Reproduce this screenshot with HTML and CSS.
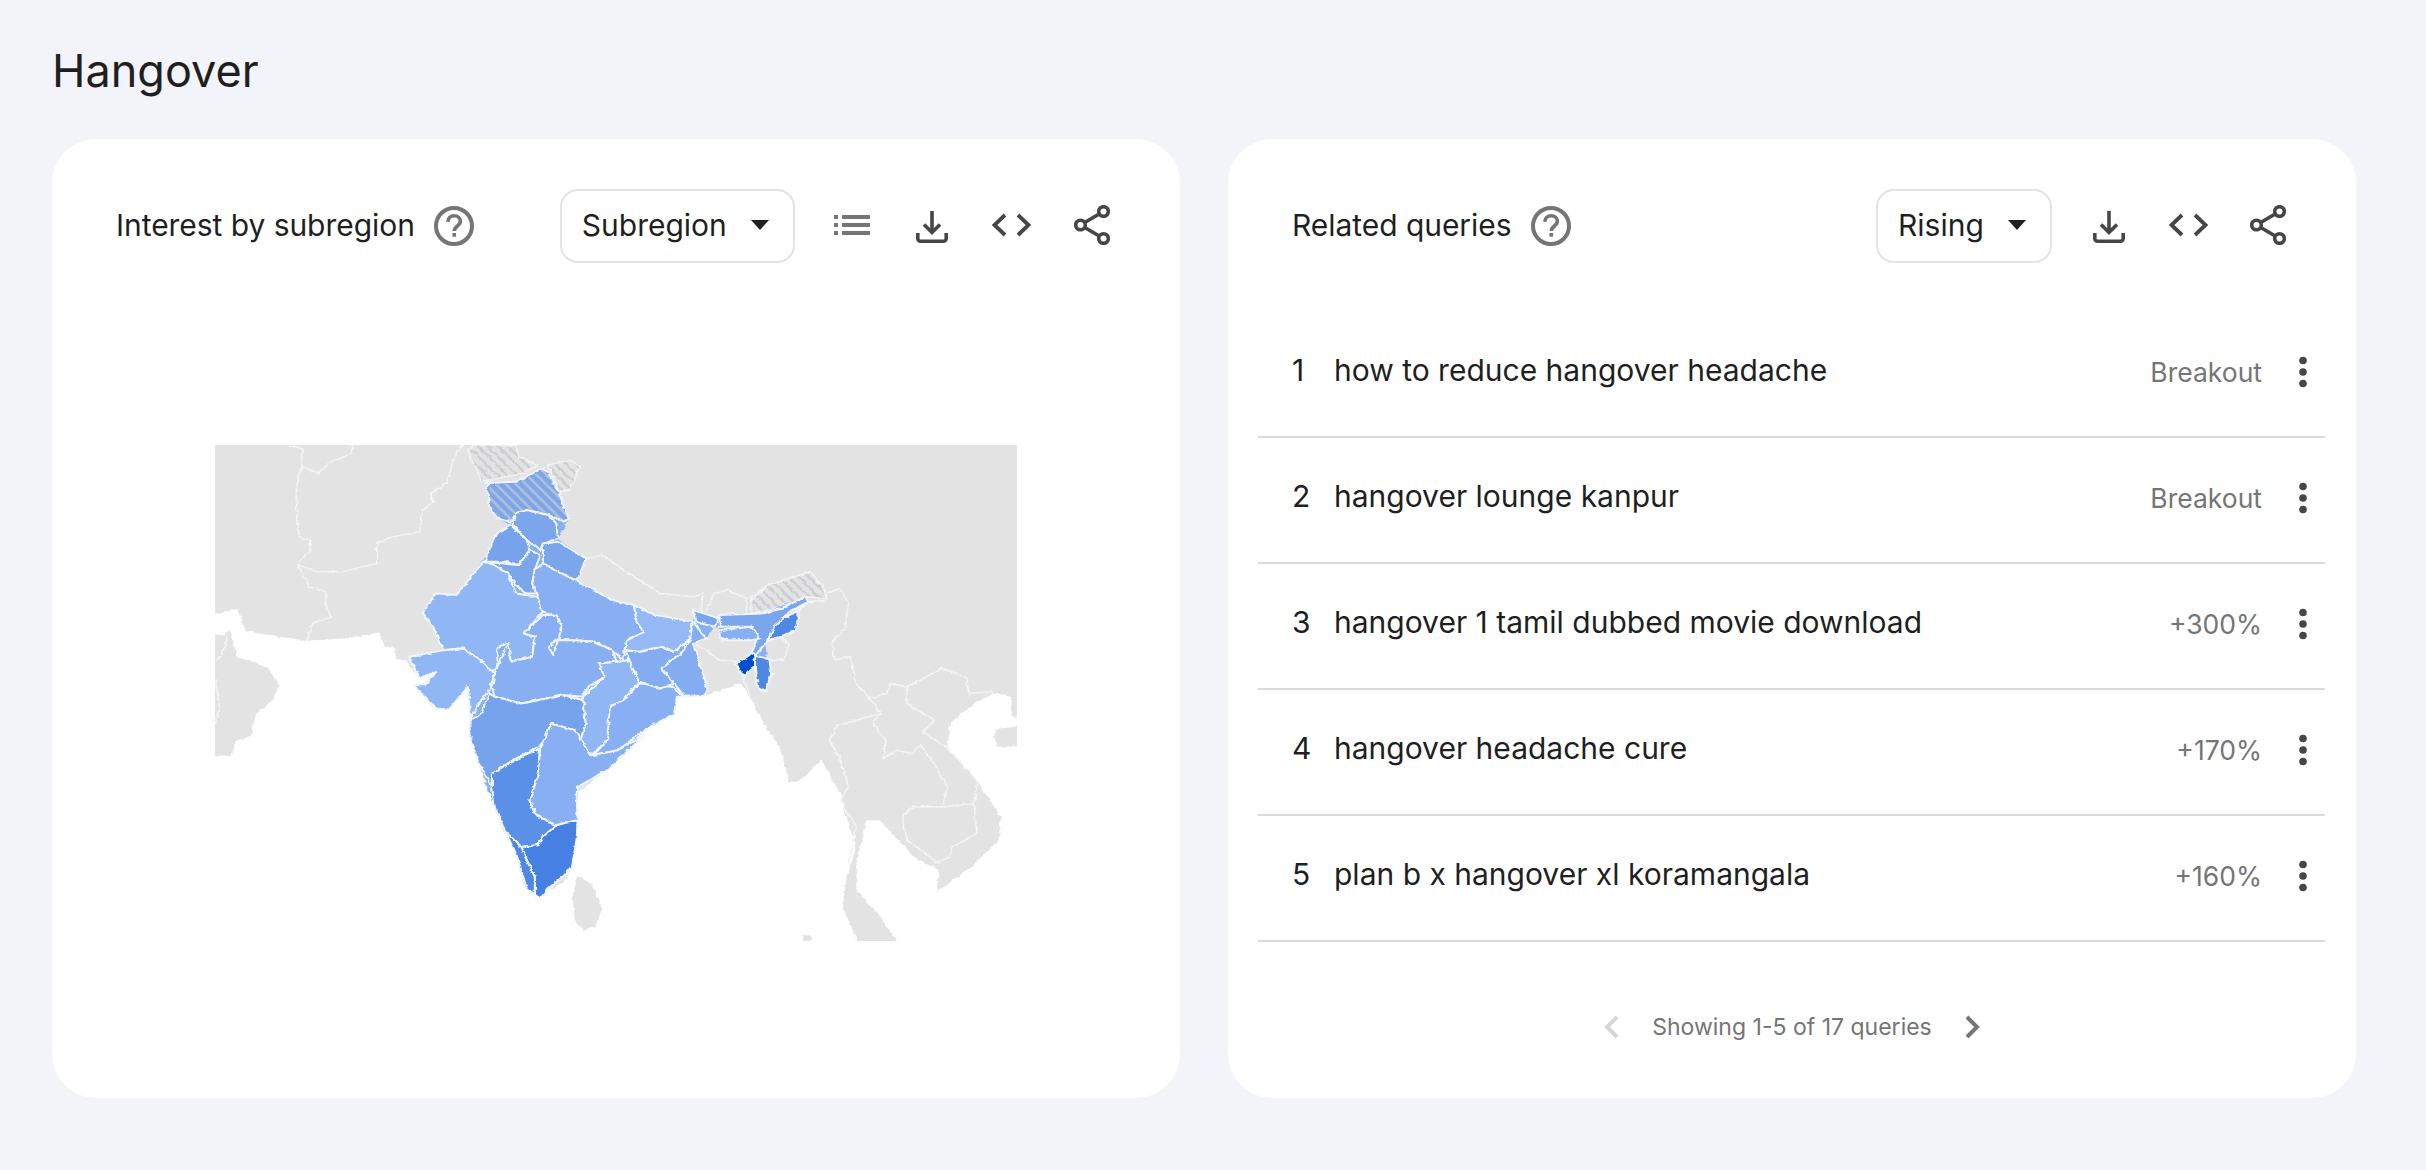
FILE: index.html
```html
<!DOCTYPE html>
<html lang="en">
<head>
<meta charset="utf-8">
<title>Hangover</title>
<link rel="stylesheet" href="styles.css">
</head>
<body>
<svg class="defs" width="0" height="0" aria-hidden="true">
  <defs>
    <symbol id="i-help" viewBox="0 0 40 40"><circle cx="20" cy="20" r="18" fill="none" stroke="currentColor" stroke-width="4"/><path d="M13.800 15.800c.2-3.700 2.900-6 6.400-6 3.500 0 6.200 2.300 6.200 5.300 0 2.600-1.500 3.800-3.200 5.100-1.500 1.200-2.900 2.300-2.900 4.800" fill="none" stroke="currentColor" stroke-width="3.600"/><rect x="18.400" y="27" width="3.700" height="3.700" fill="currentColor"/></symbol>
    <symbol id="i-list" viewBox="0 0 36 20"><path d="M0 0h4v4H0zM8 0h28v4H8zM0 8h4v4H0zM8 8h28v4H8zM0 16h4v4H0zM8 16h28v4H8z" fill="currentColor"/></symbol>
    <symbol id="i-download" viewBox="0 0 32 32"><path d="M16 0v21M8 13.500l8 8 8-8" fill="none" stroke="currentColor" stroke-width="3.600"/><path d="M1.800 22v5.500a2.700 2.700 0 0 0 2.700 2.700h23a2.700 2.700 0 0 0 2.700-2.700V22" fill="none" stroke="currentColor" stroke-width="3.600"/></symbol>
    <symbol id="i-code" viewBox="0 0 39 24"><path d="M13 2 2.500 12 13 22M26 2l10.500 10L26 22" fill="none" stroke="currentColor" stroke-width="3.800"/></symbol>
    <symbol id="i-share" viewBox="0 0 36 40"><path d="M29.500 6.500 6.500 20l23 13.500" fill="none" stroke="currentColor" stroke-width="3.600"/><circle cx="29.500" cy="6.500" r="4.800" fill="#fff" stroke="currentColor" stroke-width="3.600"/><circle cx="6.500" cy="20" r="4.800" fill="#fff" stroke="currentColor" stroke-width="3.600"/><circle cx="29.500" cy="33.500" r="4.800" fill="#fff" stroke="currentColor" stroke-width="3.600"/></symbol>
    <symbol id="i-dots" viewBox="0 0 12 32"><circle cx="6" cy="4.500" r="3.800" fill="currentColor"/><circle cx="6" cy="16" r="3.800" fill="currentColor"/><circle cx="6" cy="27.500" r="3.800" fill="currentColor"/></symbol>
    <pattern id="hatch" patternUnits="userSpaceOnUse" width="18.670" height="30"><polygon points="0,0 6.500,0 18.670,19.600 18.670,30"/><polygon points="0,19.600 6.500,30 0,30"/></pattern>
    <filter id="rough" x="-2%" y="-2%" width="104%" height="104%"><feTurbulence type="fractalNoise" baseFrequency="0.09 0.07" numOctaves="3" seed="4"/><feDisplacementMap in="SourceGraphic" scale="9" xChannelSelector="R" yChannelSelector="G"/></filter>
  </defs>
</svg>

<h1 class="title">Hangover</h1>

<main class="cards">
  <section class="card">
    <header class="card-head">
      <h2 class="card-title">Interest by subregion</h2>
      <svg class="help"><use href="#i-help"/></svg>
      <div class="select select-sub"><span>Subregion</span><i class="caret"></i></div>
      <div class="tools">
        <span class="tool tool-list"><svg class="ic-list"><use href="#i-list"/></svg></span>
        <span class="tool"><svg class="ic-dl"><use href="#i-download"/></svg></span>
        <span class="tool"><svg class="ic-code"><use href="#i-code"/></svg></span>
        <span class="tool"><svg class="ic-share"><use href="#i-share"/></svg></span>
      </div>
    </header>

    <svg class="map" viewBox="28 45 1497 1487" preserveAspectRatio="none" role="img" aria-label="Map of India by subregion">
      <rect class="land" x="0" y="0" width="1600" height="1600"/>
      <g class="sea" filter="url(#rough)">
        <polygon points="-20,565 45,545 72,537 78,570 85,603 130,615 200,632 270,625 335,607 345,650 365,655 365,690 385,690 395,715 410,745 440,725 420,765 400,765 440,835 465,838 500,770 500,800 505,865 505,920 520,1000 535,1070 550,1130 565,1200 590,1270 605,1370 635,1405 650,1380 680,1355 695,1305 690,1280 705,1180 703,1090 760,1020 830,900 885,850 890,800 945,795 1010,760 1030,810 1060,900 1085,960 1100,1060 1120,1050 1160,990 1195,1090 1205,1150 1225,1250 1205,1360 1200,1430 1245,1600 -20,1600 -20,980 60,975 65,935 95,915 105,850 130,820 150,765 125,712 70,680 62,640 55,600 45,615 -20,605"/>
        <polygon points="1330,1600 1270,1460 1225,1380 1225,1300 1245,1170 1270,1170 1285,1200 1340,1290 1380,1320 1375,1385 1440,1310 1490,1230 1495,1160 1450,1050 1395,950 1400,880 1445,820 1480,790 1515,800 1515,860 1600,860 1600,1600"/>
      </g>
      <g class="land-shape" filter="url(#rough)">
        <polygon points="705,1335 730,1360 750,1430 740,1490 715,1498 700,1470 695,1400"/>
        <polygon points="1600,880 1490,895 1480,925 1490,950 1600,935"/>
        <polygon points="1115,1600 1125,1515 1140,1515 1140,1600"/>
      </g>
      <g class="borders" filter="url(#rough)">
        <polyline points="165,45 190,55 190,110 220,130 245,95 285,70 285,45"/>
        <polyline points="190,110 180,170 180,240 185,320 205,330 205,360 182,403"/>
        <polyline points="182,403 220,425 265,425 330,400 330,340 360,320 410,305 415,240 435,215 430,190 460,160 475,80 490,45"/>
        <polyline points="182,403 205,470 235,485 235,535 245,560 210,580 200,630"/>
        <polyline points="28,750 38,830 28,880"/>
        <polyline points="50,620 40,680 28,690"/>
        <polyline points="720,385 750,375 800,430 860,490 920,500 940,490 935,545"/>
        <polyline points="945,545 960,490 985,480 1020,505 1020,550"/>
        <polyline points="1020,510 1060,465 1140,425 1165,480 1170,510 1135,515"/>
        <polyline points="1170,490 1195,475 1210,520 1205,590 1180,640 1185,690 1215,680 1225,760 1250,805 1280,790 1290,760 1320,770 1385,715 1430,740 1435,790 1480,785"/>
        <polyline points="1100,640 1090,690 1060,690"/>
        <polyline points="1135,515 1100,560 1075,615 1100,640"/>
        <polyline points="925,640 945,660 970,690 1000,695 1010,725 1030,810"/>
        <polyline points="970,630 1030,630"/>
        <polyline points="1250,805 1270,850 1190,885 1175,930 1195,990 1210,1070 1195,1110 1225,1190 1210,1300"/>
        <polyline points="1270,850 1255,880 1280,930 1275,985 1300,960 1330,970 1345,945 1370,1000 1395,1070 1385,1130 1330,1130 1310,1160 1320,1230 1380,1300"/>
        <polyline points="1385,1130 1445,1120 1450,1210 1405,1250 1400,1280 1370,1300"/>
        <polyline points="1320,770 1320,820 1350,850 1370,870 1350,905 1400,960 1450,1050 1445,1120"/>
      </g>
      <g class="hatched filled-land" filter="url(#rough)">
        <polygon points="500,62 510,45 590,45 595,80 630,105 605,130 540,150 525,155"/>
        <polygon points="650,105 690,90 710,110 690,180 670,185"/>
        <polygon points="1030,510 1060,465 1140,425 1165,480 1170,505 1130,500 1085,535 1030,548"/>
      </g>
      <g class="states" filter="url(#rough)">
        <polygon class="s-base" points="535,160 590,155 640,115 650,130 670,185 690,265 668,325 720,385 705,455 770,510 810,525 850,555 920,575 925,540 970,565 970,555 1050,550 1130,500 1135,515 1100,545 1110,600 1065,625 1055,640 1062,730 1055,780 1040,720 1033,705 1015,738 1005,700 1030,670 1040,620 1030,630 970,620 970,590 960,590 945,625 920,640 945,760 945,795 905,800 890,800 885,850 830,900 760,1020 705,1070 705,1170 695,1305 650,1375 635,1405 610,1375 590,1270 550,1130 520,1000 505,920 505,865 500,770 465,838 440,835 400,765 420,765 440,725 410,745 390,680 455,660 435,590 415,550 440,490 480,495 510,430 535,375 555,310 580,285 555,265 540,230"/>
        <polygon class="s-k" points="535,160 590,155 640,115 650,130 670,185 680,235 690,265 680,275 650,255 610,240 590,250 580,275 555,265 540,230"/>
        <polygon class="s-k" points="590,250 610,240 650,255 665,280 668,325 640,340 635,360 610,330 585,285"/>
        <polygon class="s-m" points="555,310 580,285 610,330 615,360 595,405 570,395 535,395 535,375"/>
        <polygon class="s-k" points="640,340 670,335 720,385 705,450 680,440 640,400"/>
        <polygon class="s-k" points="535,395 595,405 615,360 635,375 625,420 620,460 635,490 610,490 590,465 575,430 550,405"/>
        <polygon class="s-a" points="530,395 550,405 575,430 590,490 630,500 640,545 605,610 625,620 620,680 580,695 575,640 555,650 555,710 545,725 515,680 485,655 455,660 435,590 415,550 440,490 480,495 510,430"/>
        <polygon class="s-a" points="390,680 455,660 490,655 515,680 550,730 540,780 525,810 505,865 500,770 465,838 440,835 400,765 420,765 440,725 410,745"/>
        <polygon class="s-b" points="625,420 640,400 705,455 770,510 810,525 815,575 828,605 795,632 790,690 770,660 735,635 700,630 665,630 650,650 660,675 670,620 675,590 665,555 640,545 630,500 620,460"/>
        <polygon class="s-b" points="555,710 575,640 580,695 620,680 625,620 605,610 640,555 665,555 675,590 670,620 660,675 650,650 665,630 700,630 735,635 770,660 778,695 745,700 755,740 725,770 715,800 680,795 600,820 550,800 545,770 550,730"/>
        <polygon class="s-m" points="540,790 550,800 600,820 680,795 715,810 720,880 710,930 700,900 655,880 640,940 585,990 545,1030 545,1070 520,1000 505,920 505,870 525,850"/>
        <polygon class="s-a" points="778,695 800,690 820,755 790,810 765,830 765,880 760,930 730,975 710,930 720,880 715,800 755,740 745,700"/>
        <polygon class="s-b" points="820,760 880,770 905,800 890,800 885,850 830,900 780,960 735,975 760,930 765,830 790,810"/>
        <polygon class="s-c" points="795,660 820,665 860,650 885,665 915,625 905,660 860,715 885,760 860,775 820,755 800,690"/>
        <polygon class="s-z" points="810,525 850,555 920,575 915,625 885,665 860,650 820,665 795,660 795,632 828,605 815,575"/>
        <polygon class="s-k" points="920,540 950,555 968,565 960,590 925,575"/>
        <polygon class="s-c" points="920,575 945,625 920,640 925,665 945,760 945,795 905,800 885,760 860,715 905,660 915,625"/>
        <polygon class="s-k" points="970,555 1050,550 1085,535 1130,500 1135,515 1100,545 1065,620 1055,640 1040,670 1030,670 1040,620 1030,590 970,590"/>
        <polygon class="s-b" points="970,600 1030,590 1045,625 1030,630 985,630 970,620"/>
        <polygon class="s-n" points="1118,543 1112,602 1083,620 1062,630 1072,588 1092,560"/>
        <polygon class="s-t" points="1001,700 1023,677 1033,666 1037,705 1023,724 1014,742"/>
        <polygon class="s-n" points="1036,676 1063,688 1066,732 1057,784 1043,778 1036,722"/>
        <polygon class="s-d" points="545,1070 545,1030 585,990 635,955 630,1040 615,1110 625,1150 665,1185 640,1220 630,1245 600,1250 570,1205 550,1130"/>
        <polygon class="s-b" points="640,940 655,880 700,900 730,975 780,960 830,915 760,1020 705,1070 703,1090 705,1170 665,1185 625,1150 615,1110 630,1040 635,955"/>
        <polygon class="s-e" points="665,1185 705,1170 703,1225 695,1305 680,1335 650,1375 635,1405 625,1395 625,1340 610,1290 600,1250 630,1245 640,1220"/>
        <polygon class="s-n" points="570,1205 600,1250 610,1290 625,1340 625,1395 635,1405 610,1375 590,1270"/>
      </g>
      <polygon class="hatched" points="540,165 590,160 640,120 650,135 668,185 678,235 686,262 680,270 650,250 610,236 590,246 580,270 557,260 543,228"/>
    </svg>
  </section>

  <section class="card">
    <header class="card-head">
      <h2 class="card-title">Related queries</h2>
      <svg class="help"><use href="#i-help"/></svg>
      <div class="select select-rise"><span>Rising</span><i class="caret"></i></div>
      <div class="tools">
        <span class="tool"><svg class="ic-dl"><use href="#i-download"/></svg></span>
        <span class="tool"><svg class="ic-code"><use href="#i-code"/></svg></span>
        <span class="tool"><svg class="ic-share"><use href="#i-share"/></svg></span>
      </div>
    </header>

    <ol class="rows">
      <li class="row"><span class="num">1</span><span class="query">how to reduce hangover headache</span><span class="val">Breakout</span><svg class="dots"><use href="#i-dots"/></svg></li>
      <li class="row"><span class="num">2</span><span class="query">hangover lounge kanpur</span><span class="val">Breakout</span><svg class="dots"><use href="#i-dots"/></svg></li>
      <li class="row"><span class="num">3</span><span class="query">hangover 1 tamil dubbed movie download</span><span class="val">+300%</span><svg class="dots"><use href="#i-dots"/></svg></li>
      <li class="row"><span class="num">4</span><span class="query">hangover headache cure</span><span class="val">+170%</span><svg class="dots"><use href="#i-dots"/></svg></li>
      <li class="row"><span class="num">5</span><span class="query">plan b x hangover xl koramangala</span><span class="val">+160%</span><svg class="dots"><use href="#i-dots"/></svg></li>
    </ol>

    <nav class="pager">
      <svg class="chev chev-off" viewBox="0 0 16 24"><path d="M13 2 3 12l10 10" fill="none" stroke="currentColor" stroke-width="4"/></svg>
      <span class="pager-text">Showing 1-5 of 17 queries</span>
      <svg class="chev" viewBox="0 0 16 24"><path d="m3 2 10 10L3 22" fill="none" stroke="currentColor" stroke-width="4"/></svg>
    </nav>
  </section>
</main>
</body>
</html>
```
FILE: styles.css
```css
* { box-sizing: border-box; }
html, body { margin: 0; }
body {
  width: 2426px;
  height: 1170px;
  overflow: hidden;
  padding: 0 70px 0 52px;
  background: #f2f4f9;
  color: #1f1f1f;
  font-family: Inter, "Noto Sans", sans-serif;
}
.defs { position: absolute; }
.title { margin: 0; padding-top: 43px; height: 139px; font-size: 45px; line-height: 56px; font-weight: 400; }
.cards { display: grid; grid-template-columns: 1128px 1128px; gap: 48px; }
.card { height: 959px; background: #fff; border-radius: 44px; display: flex; flex-direction: column; }
.card-head { display: flex; align-items: center; height: 74px; margin-top: 50px; padding-left: 64px; flex: none; }
.card-title { margin: 0 0 3px; font-size: 30px; line-height: 40px; font-weight: 400; letter-spacing: -.05px; }
.help { width: 40px; height: 40px; margin-left: 19px; color: #757575; flex: none; }
.select { display: flex; align-items: center; justify-content: space-between; height: 74px; padding: 0 24px 3px 20px; border: 2px solid #e3e3e3; border-radius: 18px; font-size: 30px; flex: none; }
.select-sub { width: 235px; margin-left: 86px; }
.select-rise { width: 176px; margin-left: auto; }
.caret { width: 0; height: 0; border-left: 9px solid transparent; border-right: 9px solid transparent; border-top: 10px solid #1f1f1f; }
.tools { display: flex; color: #444746; margin-left: 17px; }
.tool { width: 80px; height: 74px; display: flex; align-items: center; justify-content: center; padding-bottom: 2px; }
.tool-list { color: #757575; }
.card-head:has(.select-rise) .tools { padding-right: 48px; margin-left: 16px; }
.ic-list { width: 36px; height: 20px; }
.ic-dl { width: 32px; height: 32px; margin: 3px 0 0 1px; }
.ic-code { width: 39px; height: 24px; }
.ic-share { width: 36px; height: 40px; }
.map { display: block; width: 802px; height: 496px; margin: 182px auto 0; flex: none; }
.land, .land-shape polygon { fill: #e3e3e3; }
.sea polygon { fill: #fff; }
.borders polyline { fill: none; stroke: #f4f4f4; stroke-width: 1.6px; vector-effect: non-scaling-stroke; }
.hatched { fill: url(#hatch); }
.hatched polygon, polygon.hatched { fill: url(#hatch); }
.filled-land polygon { stroke: #f4f4f4; stroke-width: 1.6px; vector-effect: non-scaling-stroke; }
pattern polygon { fill: #c4c7ca; fill-opacity: .8; }
.states polygon { stroke: #f0f5fe; stroke-width: 2px; vector-effect: non-scaling-stroke; stroke-linejoin: round; }
.states .s-base { fill: #88aff1; stroke: none; }
.s-z { fill: #94b9f5; }
.s-a { fill: #90b6f4; }
.s-b { fill: #88aff1; }
.s-c { fill: #84acf0; }
.s-k { fill: #7ba6ec; }
.s-m { fill: #76a3ec; }
.s-d { fill: #5a90e5; }
.s-n { fill: #4f88e4; }
.s-e { fill: #4480e2; }
.s-t { fill: #0550d2; }
.rows { list-style: none; margin: 49px 0 0; padding: 0; flex: none; }
.row { display: flex; align-items: center; height: 126px; margin: 0 31px 0 30px; padding: 0 0 4px 34px; border-bottom: 2px solid #dadce0; }
.num { width: 42px; font-size: 30px; flex: none; margin-bottom: 4px; }
.query { font-size: 30px; flex: 1; margin-bottom: 4px; }
.val { font-size: 26.5px; color: #757575; }
.dots { width: 12px; height: 32px; margin-left: 35px; margin-right: 16px; color: #444746; flex: none; }
.pager { display: flex; align-items: center; justify-content: center; margin-top: 71px; color: #757575; }
.pager-text { font-size: 23px; margin: 0 32px; }
.chev { width: 16px; height: 24px; }
.chev-off { color: #d6d6d6; }
```
